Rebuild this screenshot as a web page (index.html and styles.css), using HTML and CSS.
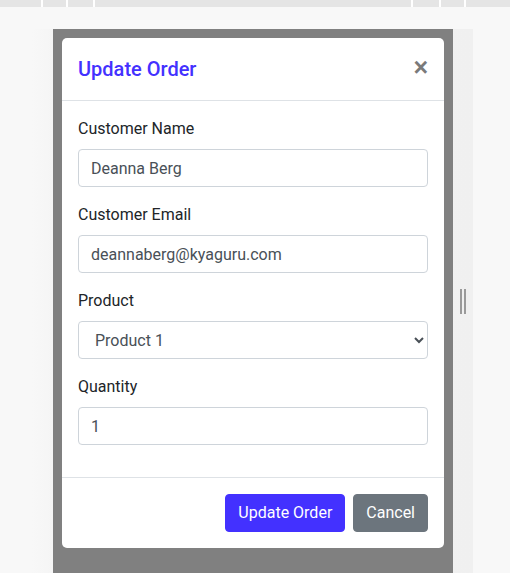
FILE: index.html
```html
<!DOCTYPE html>
<html lang="en">
<head>
<meta charset="utf-8">
<title>Update Order</title>
<link rel="stylesheet" href="styles.css">
</head>
<body>
<div class="topbar">
  <span class="seg s1"></span><span class="seg s2"></span><span class="seg s3"></span><span class="seg s4"></span><span class="seg s5"></span><span class="seg s6"></span><span class="seg s7"></span>
</div>
<div class="stage">
  <div class="frame">
    <div class="overlay">
      <div class="modal">
        <div class="modal-header">
          <h5 class="modal-title">Update Order</h5>
          <button class="close" type="button" aria-label="Close">&times;</button>
        </div>
        <div class="modal-body">
          <div class="form-group">
            <label class="label">Customer Name</label>
            <input class="form-control" type="text" value="Deanna Berg">
          </div>
          <div class="form-group">
            <label class="label">Customer Email</label>
            <input class="form-control" type="email" value="deannaberg@kyaguru.com">
          </div>
          <div class="form-group">
            <label class="label">Product</label>
            <select class="form-control select">
              <option>Product 1</option>
              <option>Product 2</option>
            </select>
          </div>
          <div class="form-group">
            <label class="label">Quantity</label>
            <input class="form-control" type="text" value="1">
          </div>
        </div>
        <div class="modal-footer">
          <button class="btn btn-primary" type="button">Update Order</button>
          <button class="btn btn-secondary" type="button">Cancel</button>
        </div>
      </div>
    </div>
    <div class="gutter"><span class="handle"></span></div>
  </div>
</div>
</body>
</html>
```

FILE: styles.css
```css
* { box-sizing: border-box; }
html, body { height: 100%; }
body {
  margin: 0;
  background: #f8f8f8;
  font-family: Roboto, "Liberation Sans", Arial, sans-serif;
  color: #212529;
  overflow: hidden;
}
.topbar {
  display: flex;
  height: 7px;
  background: #e5e5e5;
}
.seg { height: 7px; border-right: 2px solid #ffffff; }
.s1 { width: 43px; }
.s2 { width: 25px; }
.s3 { width: 27px; }
.s4 { width: 318px; }
.s5 { width: 28px; }
.s6 { width: 25px; }
.s7 { flex: 1; border-right: 0; }

.stage {
  padding: 22px 0 0 32px;
}
.frame {
  display: flex;
  width: 441px;
  height: 544px;
  padding-left: 21px;
  background: linear-gradient(90deg, #f8f8f8 0, #f5f5f5 21px, #f0f0f0 100%);
}
.overlay {
  width: 400px;
  background: #808080;
  padding: 9px;
}
.gutter {
  width: 20px;
  display: flex;
  align-items: center;
  justify-content: flex-start;
  padding-left: 7px;
}
.handle {
  display: block;
  width: 6px;
  height: 25px;
  border-left: 2px solid #9a9a9a;
  border-right: 2px solid #9a9a9a;
  margin-top: 1px;
}

.modal {
  background: #fff;
  border-radius: 5px;
  width: 382px;
}
.modal-header {
  display: flex;
  align-items: center;
  justify-content: space-between;
  padding: 16px;
  border-bottom: 1px solid #dee2e6;
}
.modal-title {
  margin: 0;
  font-size: 20px;
  font-weight: 500;
  line-height: 30px;
  color: #4331ff;
}
.close {
  border: 0;
  background: none;
  padding: 0;
  margin: 0 0 4px 0;
  font-family: "Liberation Sans", Arial, sans-serif;
  font-size: 25px;
  font-weight: 700;
  line-height: 24px;
  color: #7a7a7a;
  cursor: pointer;
}
.modal-body {
  padding: 16px;
}
.form-group {
  margin-bottom: 16px;
}
.label {
  display: block;
  font-size: 16px;
  line-height: 24px;
  margin-bottom: 8px;
  color: #212529;
}
.form-control {
  display: block;
  width: 100%;
  height: 38px;
  padding: 6px 12px;
  font-family: Roboto, "Liberation Sans", Arial, sans-serif;
  font-size: 16px;
  line-height: 24px;
  color: #495057;
  background: #fff;
  border: 1px solid #ced4da;
  border-radius: 4px;
  outline: none;
}
.select {
  padding: 6px 8px 6px 12px;
}
.modal-footer {
  display: flex;
  justify-content: flex-end;
  gap: 8px;
  padding: 16px;
  border-top: 1px solid #dee2e6;
}
.btn {
  height: 38px;
  padding: 6px 12px;
  font-family: Roboto, "Liberation Sans", Arial, sans-serif;
  font-size: 16px;
  line-height: 24px;
  border: 1px solid transparent;
  border-radius: 4px;
  color: #fff;
  cursor: pointer;
}
.btn-primary { background: #4331ff; border-color: #4331ff; }
.btn-secondary { background: #6c757d; border-color: #6c757d; }
```
